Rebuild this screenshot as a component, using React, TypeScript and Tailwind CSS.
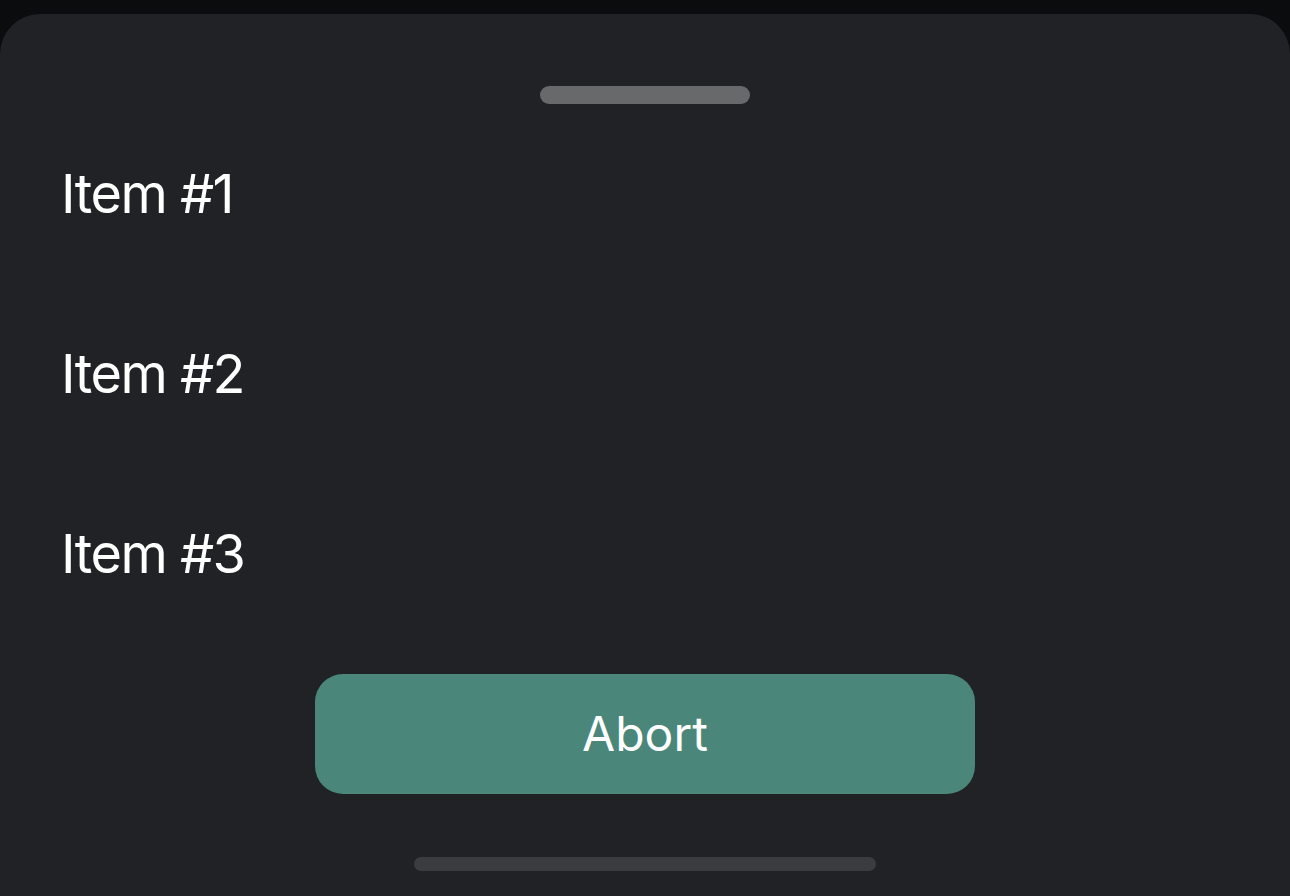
const items = ["Item #1", "Item #2", "Item #3"]

export default function App() {
  return (
    <div
      className="w-[1290px] h-[896px] bg-[#0b0c0e] pt-[14px] overflow-hidden"
      style={{ fontFamily: "Inter, 'Noto Sans', sans-serif" }}
    >
      <div className="h-[882px] bg-[#212226] rounded-t-[40px] flex flex-col items-center">
        <div className="mt-[72px] w-[210px] h-[18px] rounded-full bg-[#68696b]" />
        <div className="w-full">
          {items.map((item) => (
            <div key={item} className="h-[180px] flex items-center px-[61px]">
              <span className="text-white text-[54px] leading-none tracking-[-1.5px]">{item}</span>
            </div>
          ))}
        </div>
        <button className="mt-[30px] w-[660px] h-[120px] rounded-[28px] bg-[#4a877a] text-white text-[48px]">
          Abort
        </button>
        <div className="mt-[63px] w-[462px] h-[14px] rounded-full bg-[#3b3c3e]" />
      </div>
    </div>
  )
}
